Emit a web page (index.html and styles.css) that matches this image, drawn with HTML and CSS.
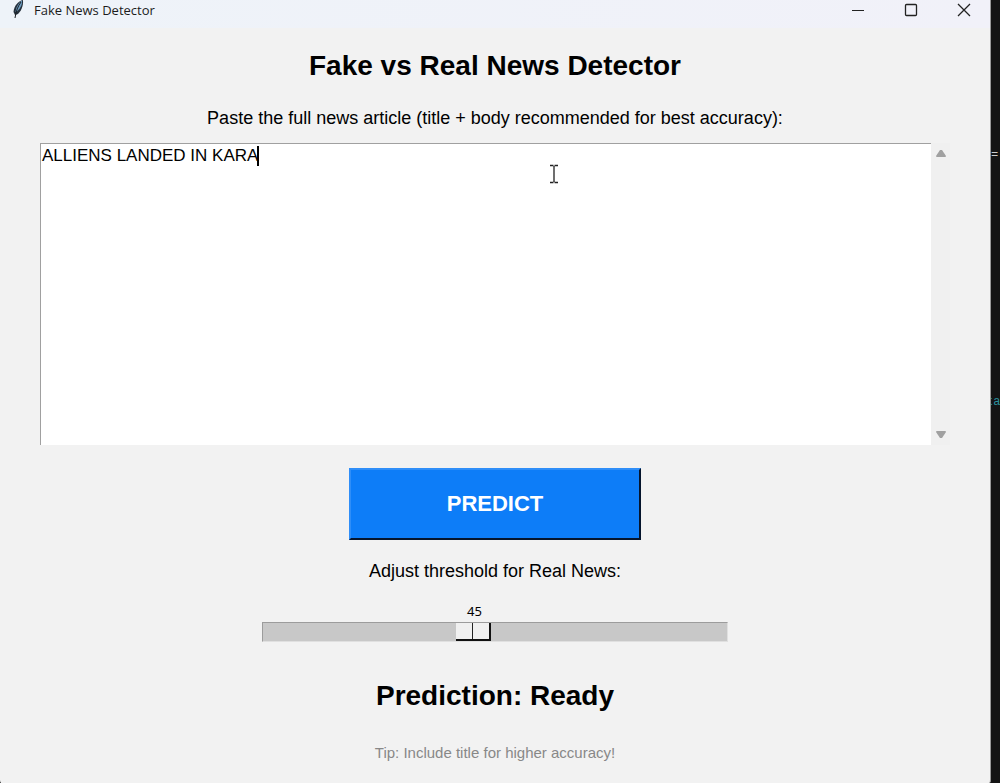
FILE: index.html
```html
<!DOCTYPE html>
<html lang="en">
<head>
<meta charset="utf-8">
<meta name="viewport" content="width=device-width, initial-scale=1">
<title>Fake News Detector</title>
<link rel="stylesheet" href="styles.css">
</head>
<body>
<div class="desktop">
  <div class="window">
    <header class="titlebar">
      <svg class="feather" width="13" height="20" viewBox="0 0 13 20" aria-hidden="true">
        <path d="M11 0C6 1 2 6 1.500 12L3 15L5 14.500C9 12 11.500 6 11 0Z" fill="#25303b"/>
        <path d="M10 0.500C6 3 4 8 3.500 12L5 11.500C9 8 10.500 4 10 0.500Z" fill="#6d9cc0"/>
        <path d="M9 2C6 6 4 11 3 18" fill="none" stroke="#1b1f24"/>
      </svg>
      <span class="caption">Fake News Detector</span>
      <div class="controls">
        <button type="button" class="control" aria-label="Minimize">
          <svg width="14" height="14" viewBox="0 0 14 14"><path d="M1 7.500H13" stroke="#222"/></svg>
        </button>
        <button type="button" class="control" aria-label="Maximize">
          <svg width="14" height="14" viewBox="0 0 14 14"><rect x="1.500" y="1.500" width="11" height="11" rx="1" fill="none" stroke="#222" stroke-width="1.300"/></svg>
        </button>
        <button type="button" class="control" aria-label="Close">
          <svg width="14" height="14" viewBox="0 0 14 14"><path d="M1 1L13 13M13 1L1 13" stroke="#222" stroke-width="1.300"/></svg>
        </button>
      </div>
    </header>
    <main class="content">
      <h1 class="heading">Fake vs Real News Detector</h1>
      <label class="label" for="article">Paste the full news article (title + body recommended for best accuracy):</label>
      <div class="editor">
        <textarea id="article" class="article" spellcheck="false">ALLIENS LANDED IN KARA</textarea>
        <div class="scrollbar">
          <svg width="12" height="8" viewBox="0 0 12 8" aria-hidden="true"><path d="M5 1H7L11 7Q11 8 10 8H2Q1 8 1 7Z" fill="#a0a0a0"/></svg>
          <svg width="12" height="8" viewBox="0 0 12 8" aria-hidden="true"><path d="M5 7H7L11 1Q11 0 10 0H2Q1 0 1 1Z" fill="#a0a0a0"/></svg>
        </div>
        <span class="caret"></span>
        <svg class="pointer" width="10" height="20" viewBox="0 0 10 20" aria-hidden="true"><path d="M1 1.500H4.500M5.500 1.500H9M5 2V18M1 18.500H4.500M5.500 18.500H9" fill="none" stroke="#222" stroke-width="1.300"/></svg>
      </div>
      <button type="button" class="predict">PREDICT</button>
      <label class="label threshold-label" for="threshold">Adjust threshold for Real News:</label>
      <div class="scale">
        <output class="value" for="threshold">45</output>
        <input id="threshold" class="slider" type="range" min="0" max="100" value="45">
      </div>
      <p class="result">Prediction: Ready</p>
      <p class="tip">Tip: Include title for higher accuracy!</p>
    </main>
  </div>
  <div class="backdrop">
    <span class="code code-rule">=</span>
    <span class="code code-word">ta</span>
  </div>
</div>
</body>
</html>
```
FILE: styles.css
```css
* {
  box-sizing: border-box;
}

body {
  margin: 0;
  background: #141414;
  font-family: "Liberation Sans", Arial, sans-serif;
  color: #000;
}

.desktop {
  display: flex;
  min-height: 100vh;
  overflow: hidden;
}

.window {
  display: flex;
  flex: 1;
  flex-direction: column;
  min-width: 0;
  background: #f2f2f2;
  border-right: 1px solid #999;
  border-radius: 0 0 4px 4px;
}

.titlebar {
  display: flex;
  align-items: flex-start;
  height: 28px;
  padding-left: 12px;
  background: linear-gradient(90deg, #eef3f9, #f1f1f9);
}

.caption {
  margin-left: 9px;
  font: 13px/20px "Open Sans", "Noto Sans", sans-serif;
  color: #1c1c1c;
}

.controls {
  display: flex;
  margin-left: auto;
}

.control {
  display: flex;
  justify-content: center;
  width: 53px;
  padding: 3px 0;
  border: 0;
  background: none;
}

.content {
  display: flex;
  flex-direction: column;
  align-items: center;
  padding: 20px 40px;
}

.heading,
.result {
  margin: 0;
  font-size: 28px;
  font-weight: bold;
  line-height: 36px;
}

.label {
  margin-top: 24px;
  font-size: 18px;
  line-height: 20px;
}

.editor {
  position: relative;
  display: flex;
  align-self: stretch;
  height: 302px;
  margin-top: 15px;
}

.article {
  flex: 1;
  min-width: 0;
  padding: 2px 1px;
  border: 0;
  border-top: 1px solid #a0a0a0;
  border-left: 1px solid #a0a0a0;
  outline: 0;
  resize: none;
  background: #fff;
  color: #000;
  font: 17px/20px "Liberation Sans", Arial, sans-serif;
}

.scrollbar {
  display: flex;
  flex-direction: column;
  align-items: center;
  justify-content: space-between;
  width: 19px;
  padding: 6px 0;
  background: #f0f0f0;
}

.caret {
  position: absolute;
  top: 3px;
  left: 217px;
  width: 2px;
  height: 20px;
  background: #000;
}

.pointer {
  position: absolute;
  top: 21px;
  left: 509px;
}

.predict {
  width: 292px;
  height: 72px;
  margin-top: 23px;
  border: 2px solid;
  border-color: #2f8ef8 #06152c #06152c #2f8ef8;
  background: #0d7df8;
  color: #fff;
  font: bold 22px/28px "Liberation Sans", Arial, sans-serif;
}

.threshold-label {
  margin-top: 21px;
}

.scale {
  display: flex;
  flex-direction: column;
  width: 466px;
  max-width: 100%;
  margin-top: 20px;
}

.value {
  width: 35px;
  margin-left: 195px;
  font: 13px/21px "Noto Sans", "Open Sans", sans-serif;
  text-align: center;
}

.slider {
  width: 100%;
  height: 20px;
  margin: 0;
  border: 1px solid;
  border-color: #9c9c9c #e0e0e0 #e0e0e0 #9c9c9c;
  background: #c8c8c8;
  appearance: none;
}

.slider::-webkit-slider-thumb {
  width: 35px;
  height: 18px;
  border: solid #111;
  border-width: 0 2px 2px 0;
  background: linear-gradient(#222, #222) 16px 0 / 1px 100% no-repeat #f0f0f0;
  appearance: none;
}

.result {
  margin-top: 36px;
}

.tip {
  margin: 28px 0 0;
  color: #888;
  font-size: 15px;
  line-height: 22px;
}

.backdrop {
  position: relative;
  width: 9px;
  overflow: hidden;
  background: #141414;
}

.code {
  position: absolute;
  left: 0;
  font: 12px/20px "Liberation Mono", monospace;
}

.code-rule {
  top: 145px;
  color: #ccc;
}

.code-word {
  top: 392px;
  left: -5px;
  color: #2b8f9c;
}
```
